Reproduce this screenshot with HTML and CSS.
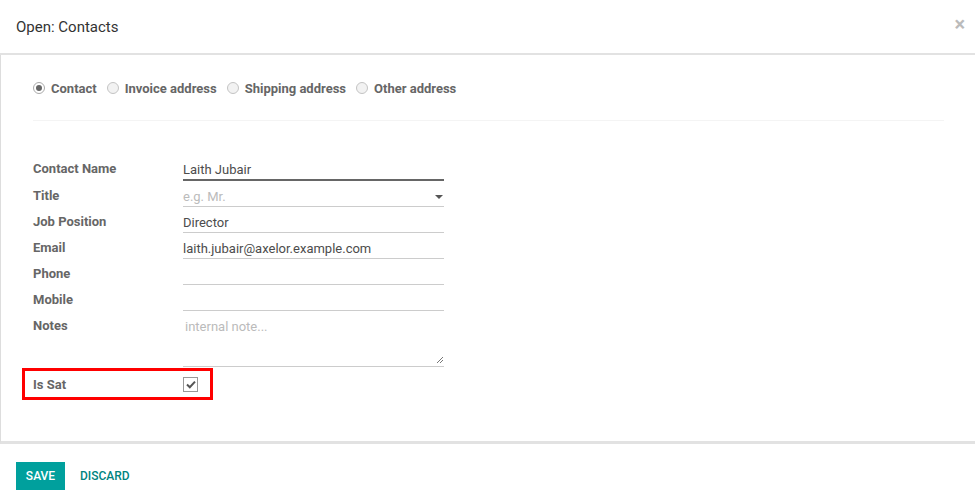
FILE: index.html
```html
<!DOCTYPE html>
<html>
<head>
<meta charset="utf-8">
<link rel="stylesheet" href="styles.css">
</head>
<body>
<div class="modal">
  <div class="modal-header">
    <h4 class="modal-title">Open: Contacts</h4>
    <span class="close">&times;</span>
  </div>
  <div class="modal-body">
    <div class="radios">
      <label class="radio checked"><span class="circle"></span>Contact</label>
      <label class="radio"><span class="circle"></span>Invoice address</label>
      <label class="radio"><span class="circle"></span>Shipping address</label>
      <label class="radio"><span class="circle"></span>Other address</label>
    </div>
    <div class="sep"></div>
    <div class="fields">
      <div class="row">
        <div class="label">Contact Name</div>
        <div class="input focused">Laith Jubair</div>
      </div>
      <div class="row">
        <div class="label">Title</div>
        <div class="input select"><span class="ph">e.g. Mr.</span><span class="caret"></span></div>
      </div>
      <div class="row">
        <div class="label">Job Position</div>
        <div class="input">Director</div>
      </div>
      <div class="row">
        <div class="label">Email</div>
        <div class="input">laith.jubair@axelor.example.com</div>
      </div>
      <div class="row">
        <div class="label">Phone</div>
        <div class="input"></div>
      </div>
      <div class="row">
        <div class="label">Mobile</div>
        <div class="input"></div>
      </div>
      <div class="row">
        <div class="label">Notes</div>
        <div class="input textarea"><span class="ph">internal note...</span>
          <svg class="grip" width="8" height="8" viewBox="0 0 8 8"><path d="M7 1 L1 7 M7 4 L4 7" stroke="#777" stroke-width="1" fill="none"/></svg>
        </div>
      </div>
      <div class="row highlight">
        <div class="label">Is Sat</div>
        <div class="checkbox">
          <svg width="10" height="9" viewBox="0 0 10 9"><path d="M1 4.5 L3.8 7.2 L9 1.6" stroke="#555" stroke-width="2" fill="none"/></svg>
        </div>
      </div>
    </div>
  </div>
  <div class="modal-footer">
    <button class="btn btn-primary">SAVE</button>
    <button class="btn btn-link">DISCARD</button>
  </div>
</div>
</body>
</html>
```

FILE: styles.css
```css
html, body {
  margin: 0;
  padding: 0;
  background: #fff;
}
body {
  font-family: Roboto, "Noto Sans", "Liberation Sans", sans-serif;
  font-size: 13px;
  color: #4c4c4c;
}
.modal {
  width: 975px;
}
.modal-header {
  height: 53px;
  display: flex;
  align-items: center;
  justify-content: space-between;
  padding: 0 10px 0 16px;
  border-bottom: 2px solid #e2e2e2;
  box-sizing: content-box;
}
.modal-title {
  margin: 0;
  font-size: 15px;
  font-weight: 400;
  color: #333;
}
.close {
  font-size: 20px;
  font-weight: 700;
  color: #bbb;
  line-height: 1;
  margin-top: -5px;
}
.modal-body {
  border-left: 1px solid #ddd;
  border-bottom: 3px solid #e2e2e2;
  padding: 22px 31px 41px 32px;
}
.radios {
  display: flex;
  align-items: center;
  height: 22px;
}
.radio {
  display: flex;
  align-items: center;
  font-weight: 700;
  color: #666;
  margin-right: 10px;
}
.circle {
  width: 12px;
  height: 12px;
  border: 1px solid #c4c4c4;
  border-radius: 50%;
  background: #f2f2f2;
  margin-right: 6px;
  box-sizing: border-box;
  display: flex;
  align-items: center;
  justify-content: center;
}
.radio.checked .circle {
  background: #fff;
  border-color: #aaa;
}
.radio.checked .circle::after {
  content: "";
  width: 6px;
  height: 6px;
  border-radius: 50%;
  background: #666;
}
.sep {
  height: 1px;
  background: #f4f4f4;
  margin: 21px 0 34px 0;
}
.fields {
  display: flex;
  flex-direction: column;
}
.row {
  display: grid;
  grid-template-columns: 150px 261px;
  align-items: start;
}
.label {
  font-weight: 700;
  color: #666;
  line-height: 20px;
  padding-top: 4px;
}
.input {
  height: 25px;
  box-sizing: border-box;
  border-bottom: 1px solid #ccc;
  padding-top: 5px;
  line-height: 19px;
  color: #4c4c4c;
  position: relative;
}
.input.focused {
  border-bottom: 2px solid #666;
  height: 26px;
}
.ph {
  color: #bbb;
}
.select {
  display: flex;
  justify-content: space-between;
  align-items: flex-start;
}
.caret {
  width: 0;
  height: 0;
  border-left: 4px solid transparent;
  border-right: 4px solid transparent;
  border-top: 4px solid #555;
  margin: 8px 1px 0 0;
}
.row + .row {
  margin-top: 1px;
}
.textarea {
  height: 55px;
  padding-left: 2px;
}
.grip {
  position: absolute;
  right: 0;
  bottom: 2px;
}
.highlight {
  border: 3px solid #f00;
  width: 191px;
  height: 32px;
  box-sizing: border-box;
  margin: 5px 0 0 -11px;
  padding-left: 8px;
  grid-template-columns: 150px 20px;
  align-items: center;
}
.highlight .label {
  padding-top: 1px;
  margin-top: 0;
}
.checkbox {
  width: 15px;
  height: 15px;
  box-sizing: border-box;
  border: 1px solid #999;
  display: flex;
  align-items: center;
  justify-content: center;
  margin-top: 1px;
}
.modal-footer {
  display: flex;
  align-items: center;
  padding: 18px 16px;
}
.btn {
  font-family: inherit;
  font-size: 12px;
  font-weight: 500;
  border: none;
  cursor: pointer;
  height: 28px;
  padding: 0 10px;
  line-height: 28px;
}
.btn-primary {
  background: #00a09d;
  color: #fff;
  width: 49px;
  padding: 0;
}
.btn-link {
  background: transparent;
  color: #00847f;
  margin-left: 5px;
}
```
